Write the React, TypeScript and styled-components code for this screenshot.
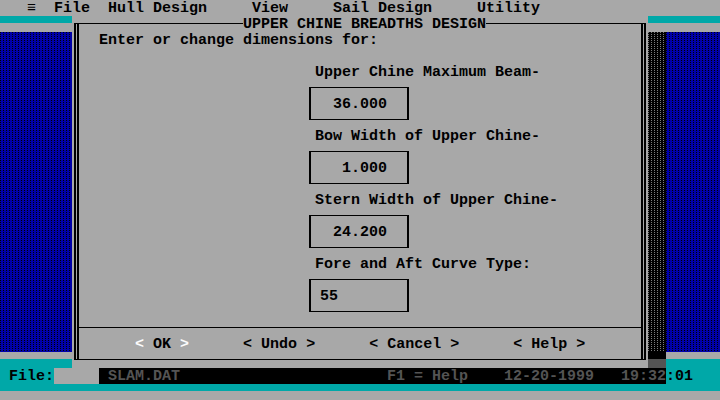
import React from 'react';
import styled, { createGlobalStyle } from 'styled-components';

const GRAY = '#a8a8a8';
const TEAL = '#00a8a8';
const BLUE = '#0000a8';
const DARK = '#545454';
const WHITE = '#fcfcfc';

const GlobalStyle = createGlobalStyle`
  html, body {
    margin: 0;
    padding: 0;
    background: ${GRAY};
  }
  body {
    font-family: "Liberation Mono", "DejaVu Sans Mono", monospace;
    font-size: 15px;
    font-weight: bold;
    line-height: 18px;
    color: #000;
  }
`;

const Screen = styled.div`
  width: 720px;
  height: 400px;
  overflow: hidden;
  display: flex;
  flex-direction: column;
  background: ${GRAY};
`;

const MenuBar = styled.div`
  height: 16px;
  display: flex;
  padding-left: 27px;
  white-space: pre;
`;

const MenuItem = styled.span<{ $gap?: number }>`
  margin-left: ${(p) => p.$gap ?? 0}px;
`;

const Middle = styled.div`
  height: 352px;
  display: flex;
`;

const Column = styled.div<{ $w: number }>`
  width: ${(p) => p.$w}px;
  display: flex;
  flex-direction: column;
`;

const Strip = styled.div<{ $h: number; $bg: string }>`
  height: ${(p) => p.$h}px;
  background: ${(p) => p.$bg};
`;

// dithered fill: one dot in every 3x2 cell
const Pattern = styled.div<{ $base: string; $dot: string }>`
  flex: 1;
  background-color: ${(p) => p.$base};
  background-image: linear-gradient(
      to bottom,
      transparent 1px,
      ${(p) => p.$base} 1px
    ),
    linear-gradient(to right, ${(p) => p.$dot} 1px, transparent 1px);
  background-size: 3px 2px;
`;

const DialogArea = styled.div`
  width: 576px;
  box-sizing: border-box;
  padding: 7px 2px 8px;
  display: flex;
`;

const Frame = styled.div`
  position: relative;
  flex: 1;
  box-sizing: border-box;
  border-top: 1px solid #000;
  border-bottom: 1px solid #000;
  border-left: 2px solid #000;
  border-right: 2px solid #000;
  box-shadow: inset 1px 0 0 ${GRAY}, inset -1px 0 0 ${GRAY},
    inset 3px 0 0 #000, inset -3px 0 0 #000;
  display: flex;
  flex-direction: column;
`;

const Title = styled.div`
  position: absolute;
  top: -8px;
  left: 167px;
  height: 16px;
  background: ${GRAY};
`;

const Intro = styled.div`
  margin-top: 8px;
  padding-left: 23px;
  height: 16px;
`;

const Fields = styled.div`
  margin-top: 16px;
  padding-left: 233px;
  display: flex;
  flex-direction: column;
`;

const Label = styled.div`
  height: 16px;
  padding-left: 6px;
  white-space: pre;
`;

const BoxSlot = styled.div`
  height: 48px;
  box-sizing: border-box;
  padding: 7px 0 8px;
`;

const Box = styled.div<{ $align: 'left' | 'right' }>`
  width: 100px;
  height: 33px;
  box-sizing: border-box;
  border-top: 1px solid #000;
  border-bottom: 1px solid #000;
  border-left: 2px solid #000;
  border-right: 2px solid #000;
  padding: 8px ${(p) => (p.$align === 'right' ? 20 : 0)}px 0
    ${(p) => (p.$align === 'left' ? 9 : 0)}px;
  text-align: ${(p) => p.$align};
`;

const ButtonBar = styled.div`
  margin: 7px 3px 0;
  border-top: 1px solid #000;
  padding: 8px 0 0 56px;
  height: 16px;
  display: flex;
  gap: 54px;
  white-space: pre;
`;

const Button = styled.span``;

const Bracket = styled.span<{ $focused?: boolean }>`
  color: ${(p) => (p.$focused ? WHITE : '#000')};
`;

const StatusBar = styled.div`
  height: 16px;
  display: flex;
  white-space: pre;
`;

const StatusCell = styled.div<{ $w?: number; $bg: string; $color?: string }>`
  ${(p) => (p.$w ? `width: ${p.$w}px;` : 'flex: 1;')}
  height: 16px;
  background: ${(p) => p.$bg};
  color: ${(p) => p.$color ?? '#000'};
  display: flex;
`;

const StatusText = styled.span<{ $gap?: number }>`
  margin-left: ${(p) => p.$gap ?? 0}px;
`;

const BottomRow = styled.div`
  display: flex;
  flex-direction: column;
`;

const fields = [
  { label: 'Upper Chine Maximum Beam-', value: '36.000', align: 'right' as const },
  { label: 'Bow Width of Upper Chine-', value: '1.000', align: 'right' as const },
  { label: 'Stern Width of Upper Chine-', value: '24.200', align: 'right' as const },
  { label: 'Fore and Aft Curve Type:', value: '55', align: 'left' as const },
];

const buttons = ['OK', 'Undo', 'Cancel', 'Help'];

const SideColumn: React.FC<{ w: number }> = ({ w }) => (
  <Column $w={w}>
    <Strip $h={7} $bg={TEAL} />
    <Strip $h={9} $bg={GRAY} />
    <Pattern $base={BLUE} $dot="#000" />
    <Strip $h={7} $bg={GRAY} />
    <Strip $h={9} $bg={TEAL} />
  </Column>
);

export default function App() {
  return (
    <>
      <GlobalStyle />
      <Screen>
        <MenuBar>
          <MenuItem>≡</MenuItem>
          <MenuItem $gap={18}>File</MenuItem>
          <MenuItem $gap={18}>Hull Design</MenuItem>
          <MenuItem $gap={45}>View</MenuItem>
          <MenuItem $gap={45}>Sail Design</MenuItem>
          <MenuItem $gap={45}>Utility</MenuItem>
        </MenuBar>

        <Middle>
          <SideColumn w={72} />
          <DialogArea>
            <Frame>
              <Title>UPPER CHINE BREADTHS DESIGN</Title>
              <Intro>Enter or change dimensions for:</Intro>
              <Fields>
                {fields.map((f) => (
                  <React.Fragment key={f.label}>
                    <Label>{f.label}</Label>
                    <BoxSlot>
                      <Box $align={f.align}>{f.value}</Box>
                    </BoxSlot>
                  </React.Fragment>
                ))}
              </Fields>
              <ButtonBar>
                {buttons.map((b, i) => (
                  <Button key={b}>
                    <Bracket $focused={i === 0}>&lt;</Bracket> {b}{' '}
                    <Bracket $focused={i === 0}>&gt;</Bracket>
                  </Button>
                ))}
              </ButtonBar>
            </Frame>
          </DialogArea>
          <Column $w={18}>
            <Strip $h={7} $bg={TEAL} />
            <Strip $h={9} $bg={GRAY} />
            <Pattern $base="#000" $dot="#7c7c7c" />
            <Strip $h={7} $bg="#000" />
            <Strip $h={9} $bg={DARK} />
          </Column>
          <SideColumn w={54} />
        </Middle>

        <StatusBar>
          <StatusCell $w={54} $bg={TEAL}>
            <StatusText $gap={9}>File:</StatusText>
          </StatusCell>
          <StatusCell $w={45} $bg={GRAY} />
          <StatusCell $bg="#000" $color={DARK}>
            <StatusText $gap={9}>SLAM.DAT</StatusText>
            <StatusText $gap={207}>F1 = Help</StatusText>
            <StatusText $gap={36}>12-20-1999</StatusText>
            <StatusText $gap={27}>19:32</StatusText>
          </StatusCell>
          <StatusCell $w={54} $bg={TEAL}>
            <StatusText>:01</StatusText>
          </StatusCell>
        </StatusBar>

        <BottomRow>
          <Strip $h={7} $bg={TEAL} />
          <Strip $h={9} $bg={GRAY} />
        </BottomRow>
      </Screen>
    </>
  );
}
